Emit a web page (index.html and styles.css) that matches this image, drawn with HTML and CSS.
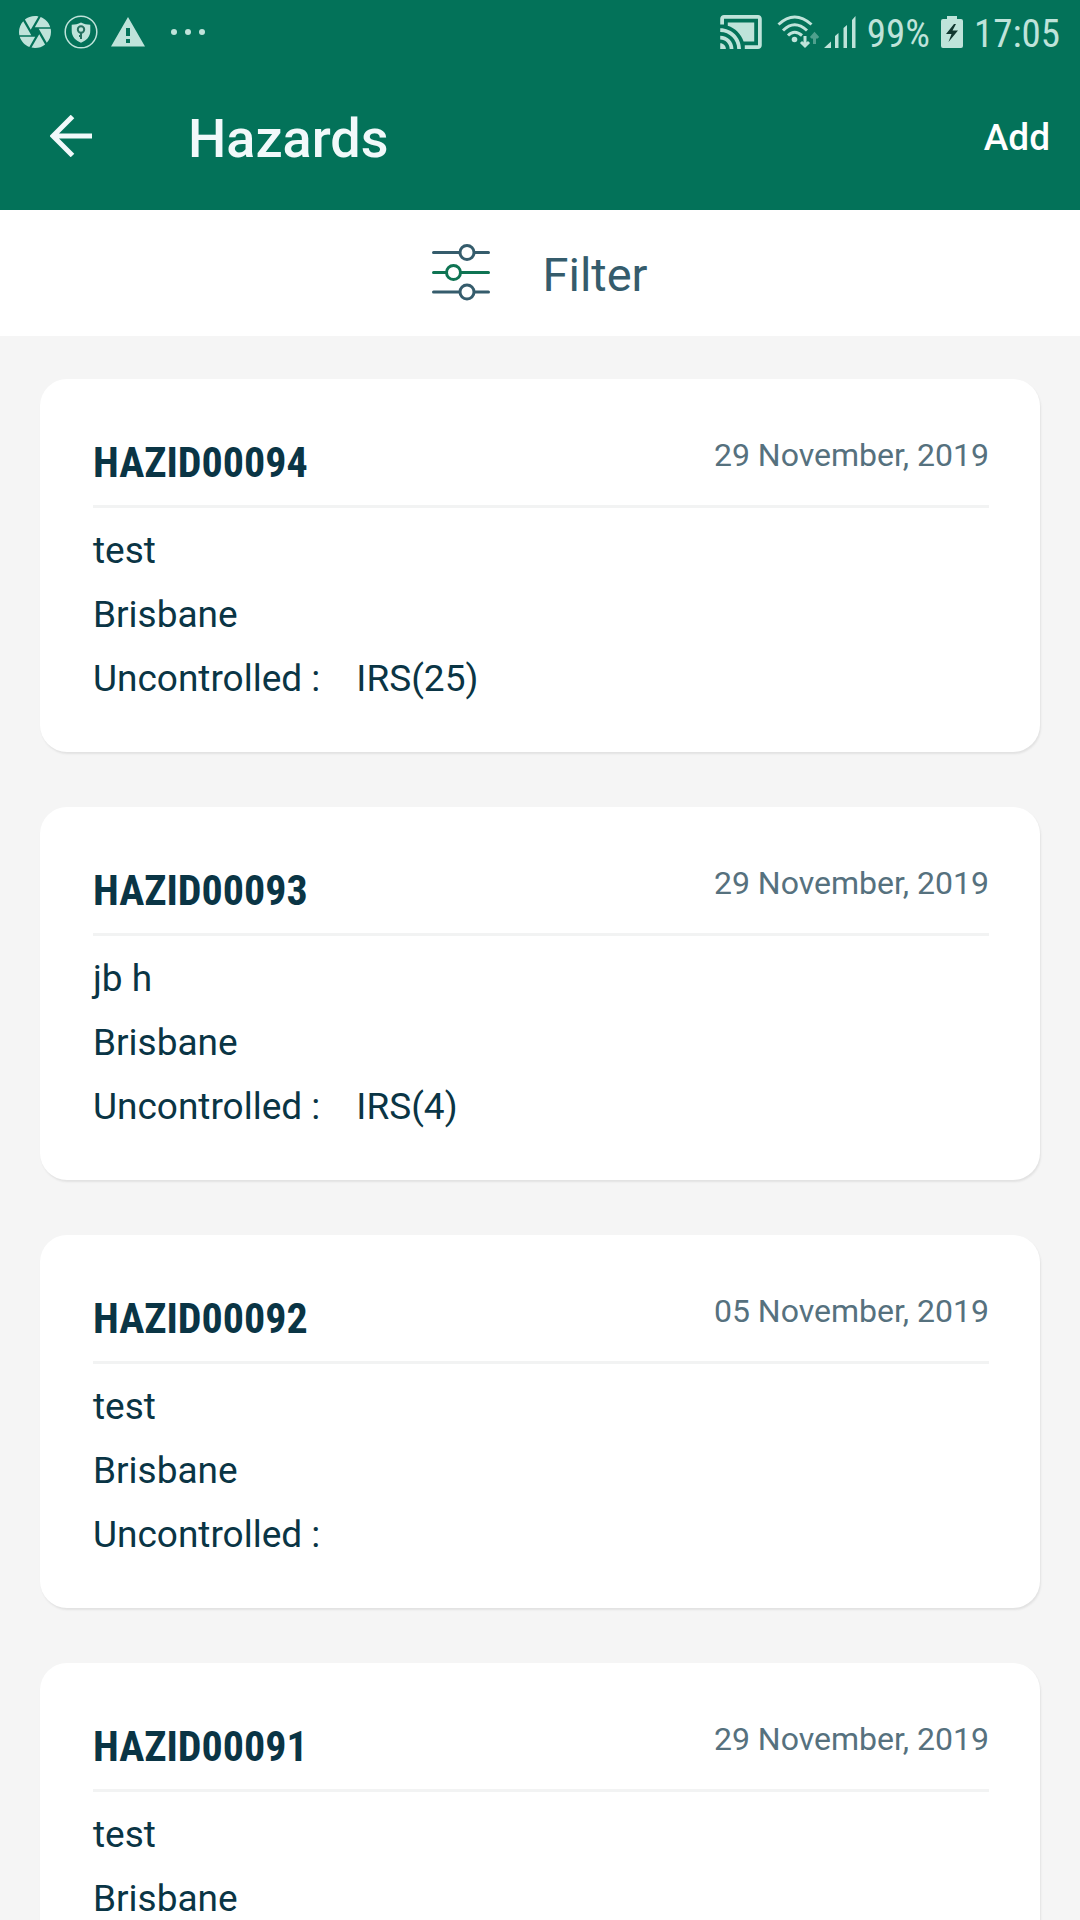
FILE: index.html
```html
<!DOCTYPE html>
<html lang="en">
<head>
<meta charset="utf-8">
<meta name="viewport" content="width=device-width, initial-scale=1">
<title>Hazards</title>
<link rel="stylesheet" href="styles.css">
</head>
<body>
<header class="top">
  <div class="status">
    <div class="status-left">
      <svg class="icon-aperture" width="32" height="32" viewBox="2 2 20 20"><path d="M9.4 10.5l4.77-8.26C13.47 2.09 12.75 2 12 2c-2.4 0-4.6.85-6.32 2.25l3.66 6.35.06-.1zM21.54 9c-.92-2.92-3.15-5.26-6-6.34L11.88 9h9.66zm.26 1h-7.49l.29.5 4.76 8.25C21 16.97 22 14.61 22 12c0-.69-.07-1.35-.2-2zM8.54 12l-3.9-6.75C3.01 7.03 2 9.39 2 12c0 .69.07 1.35.2 2h7.49l-1.15-2zm-6.08 3c.92 2.92 3.15 5.26 6 6.34L12.12 15H2.46zm11.27 0l-3.9 6.76c.7.15 1.42.24 2.17.24 2.4 0 4.6-.85 6.32-2.25l-3.66-6.35-.93 1.6z"/></svg>
      <svg class="icon-shield" width="34" height="34" viewBox="0 0 34 34"><circle class="ring" cx="17" cy="17" r="15.8"/><path d="M17 7.500c3 1.700 6 2.200 9.300 2.200v6c0 6-3.800 9.800-9.300 12-5.500-2.200-9.300-6-9.300-12v-6c3.300 0 6.300-.5 9.300-2.200z"/><circle class="key" cx="17" cy="14.500" r="3.200"/><path class="key" d="M17 17.500v6.500M17 21h-2"/></svg>
      <svg class="icon-warning" width="34" height="30" viewBox="0 0 34 30"><path fill-rule="evenodd" d="M17 0l17 29.500H0zM15 11v8h4v-8zM15 22v4h4v-4z"/></svg>
      <svg class="icon-more" width="36" height="8" viewBox="0 0 36 8"><circle cx="4" cy="4" r="3"/><circle cx="18" cy="4" r="3"/><circle cx="32" cy="4" r="3"/></svg>
    </div>
    <div class="status-right">
      <svg width="42" height="34" viewBox="1 3 22 18"><path d="M1 18v3h3c0-1.660-1.340-3-3-3zm0-4v2c2.760 0 5 2.240 5 5h2c0-3.870-3.130-7-7-7zm18-7H5v1.630c3.960 1.280 7.090 4.410 8.370 8.370H19V7zM1 10v2c4.970 0 9 4.030 9 9h2c0-6.080-4.930-11-11-11zm20-7H3c-1.100 0-2 .9-2 2v3h2V5h18v14h-7v2h7c1.100 0 2-.9 2-2V5c0-1.100-.9-2-2-2z"/></svg>
      <svg class="icon-wifi" width="42" height="34" viewBox="0 0 42 34"><path class="arc" d="M1.500 9.500Q17.500-5.500 34.500 9.500M6 15.500Q17.500 4 30 15.500M11 20.500Q17.500 14 25 20.500"/><circle cx="17.500" cy="24.500" r="2.800"/><path class="down" d="M28 21v9M24 27l4 4 4-4"/><path class="up" d="M37.500 29v-9M34 23l3.500-4 3.500 4"/></svg>
      <svg class="icon-signal" width="32" height="32" viewBox="0 0 32 32"><path d="M0 32l7-6.500V32zM11 20l3.500-3v15H11zM19.500 12l3.500-3v23h-3.500zM28 4l3.500-4v32H28z"/></svg>
      <span class="status-text">99%</span>
      <svg class="icon-battery" width="22" height="32" viewBox="0 0 22 32"><path d="M6 0h10v3h4q2 0 2 2v25q0 2-2 2H2q-2 0-2-2V5q0-2 2-2h4z"/><path class="bolt" d="M13 8L5 18h5.500L7.500 26 17 14.500h-5.500L15 8z"/></svg>
      <span class="status-text">17:05</span>
    </div>
  </div>
  <nav class="toolbar">
    <button class="back" aria-label="Back"><svg width="42" height="42" viewBox="0 0 42 42"><path d="M42 21H3M22.500 1.500L3 21l19.500 19.500"/></svg></button>
    <h1 class="title">Hazards</h1>
    <button class="add">Add</button>
  </nav>
</header>
<button class="filter">
  <svg width="58" height="58" viewBox="0 0 58 58"><path d="M1.500 8.500h26M42.500 8.500h14M1.500 48h26M42.500 48h14"/><circle cx="35" cy="8.500" r="7"/><circle cx="35" cy="48" r="7"/><g class="accent"><path d="M1.500 28.500H14M29 28.500h27.500"/><circle cx="21.500" cy="28.500" r="7"/></g></svg>
  <span class="filter-label">Filter</span>
</button>
<main class="list">
  <article class="card">
    <div class="card-head"><h2 class="card-id">HAZID00094</h2><time class="card-date" datetime="2019-11-29">29 November, 2019</time></div>
    <div class="card-body"><p>test</p><p>Brisbane</p><p class="rating"><span>Uncontrolled :</span><span>IRS(25)</span></p></div>
  </article>
  <article class="card">
    <div class="card-head"><h2 class="card-id">HAZID00093</h2><time class="card-date" datetime="2019-11-29">29 November, 2019</time></div>
    <div class="card-body"><p>jb h</p><p>Brisbane</p><p class="rating"><span>Uncontrolled :</span><span>IRS(4)</span></p></div>
  </article>
  <article class="card">
    <div class="card-head"><h2 class="card-id">HAZID00092</h2><time class="card-date" datetime="2019-11-05">05 November, 2019</time></div>
    <div class="card-body"><p>test</p><p>Brisbane</p><p class="rating"><span>Uncontrolled :</span></p></div>
  </article>
  <article class="card">
    <div class="card-head"><h2 class="card-id">HAZID00091</h2><time class="card-date" datetime="2019-11-29">29 November, 2019</time></div>
    <div class="card-body"><p>test</p><p>Brisbane</p></div>
  </article>
</main>
</body>
</html>
```
FILE: styles.css
```css
* { box-sizing: border-box; }

body {
  margin: 0;
  height: 100vh;
  display: flex;
  flex-direction: column;
  background: #f5f5f5;
  color: #0a3545;
  font-family: Roboto, "Liberation Sans", sans-serif;
}

h1, h2, p { margin: 0; }

svg { display: block; flex: none; }

button {
  border: 0;
  padding: 0;
  background: none;
  color: inherit;
  font: inherit;
  cursor: pointer;
}

.top {
  flex: none;
  background: #037259;
  color: #f1f9fa;
}

.status {
  height: 64px;
  padding: 0 20px 0 19px;
  display: flex;
  justify-content: space-between;
  align-items: center;
  color: #bfe3da;
  fill: currentColor;
}

.status-left, .status-right {
  display: flex;
  align-items: center;
}

.status-left { gap: 13px; }
.status-right { gap: 11px; }

.icon-more { margin-left: 12px; }
.icon-wifi { margin-left: 4px; }
.icon-signal { margin-left: -6px; }

.ring { fill: none; stroke: currentColor; stroke-width: 1.5; }
.key { fill: none; stroke: #256f5e; stroke-width: 2; }
.arc { fill: none; stroke: currentColor; stroke-width: 3; }
.down { fill: none; stroke: currentColor; stroke-width: 3; }
.up { fill: none; stroke: #4fa08d; stroke-width: 3; }
.bolt { fill: #12362f; }

.status-text {
  padding-top: 3px;
  font-family: "Roboto Condensed", Roboto, sans-serif;
  font-size: 39px;
  line-height: 48px;
}

.toolbar {
  height: 146px;
  padding: 0 30px 2px 50px;
  display: flex;
  align-items: center;
}

.back svg {
  fill: none;
  stroke: currentColor;
  stroke-width: 5;
}

.title {
  flex: 1;
  margin-left: 96px;
  padding-top: 6px;
  font-size: 54px;
  font-weight: 500;
  line-height: 64px;
}

.add {
  padding-top: 4px;
  color: #fff;
  font-size: 37px;
  font-weight: 500;
  line-height: 48px;
}

.filter {
  flex: none;
  height: 126px;
  display: flex;
  justify-content: center;
  align-items: center;
  gap: 52px;
  background: #fff;
  color: #355c6c;
  font-size: 47px;
  line-height: 56px;
}

.filter-label { padding-top: 3px; }

.filter svg {
  fill: none;
  stroke: currentColor;
  stroke-width: 3;
  stroke-linecap: round;
}

.filter .accent { stroke: #0f7453; }

.list {
  flex: 1;
  min-height: 0;
  overflow-y: auto;
  scrollbar-width: none;
  padding: 43px 40px;
}

.card {
  padding: 60px 51px 41px 53px;
  border-radius: 27px;
  background: #fff;
  box-shadow: 1px 2px 2px #e2e2e2;
}

.card + .card { margin-top: 55px; }

.card-head {
  display: flex;
  justify-content: space-between;
  align-items: flex-start;
  padding-bottom: 18px;
  border-bottom: 3px solid #f2f3f3;
}

.card-id {
  font-family: "Roboto Condensed", Roboto, sans-serif;
  font-size: 42px;
  font-weight: 700;
  line-height: 48px;
}

.card-date {
  color: #56717e;
  font-size: 32px;
  line-height: 32px;
}

.card-body {
  padding-top: 11px;
  font-size: 37px;
  line-height: 64px;
}

.rating {
  display: flex;
  gap: 36px;
}
```
